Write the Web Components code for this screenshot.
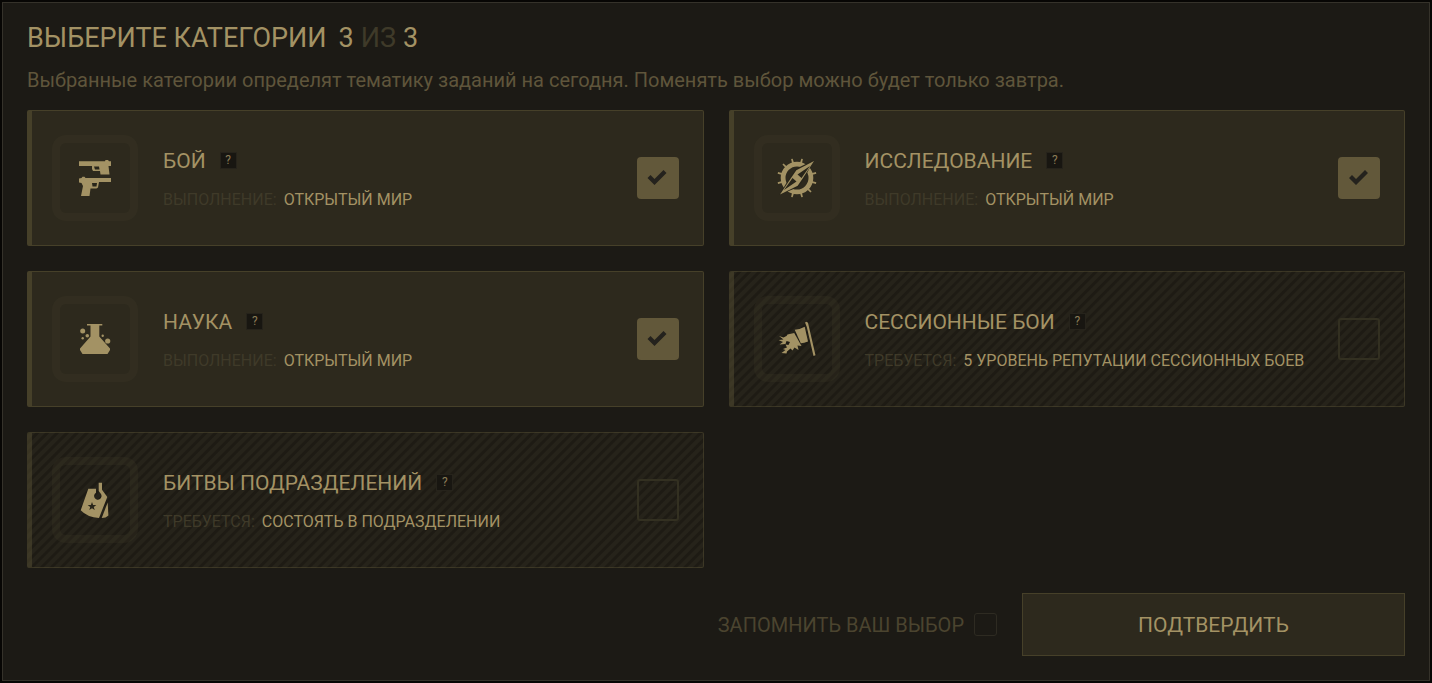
<!DOCTYPE html>
<html lang="ru">
<head>
<meta charset="utf-8">
<title>Выбор категорий</title>
<style>
  :root {
    --gold: #a39264;
    --muted: #5f553b;
    --faint: #3f3a29;
    --page: #1c1a15;
    --card: #2d291d;
    --line: #464029;
  }
  html { background: #070604; }
  body {
    margin: 0;
    padding: 2px;
    color: var(--gold);
    font-family: Roboto, "Liberation Sans", sans-serif;
  }
</style>
</head>
<body>
<category-picker>
  <span slot="heading">ВЫБЕРИТЕ КАТЕГОРИИ</span>
  <pick-counter slot="counter" picked="3" total="3"></pick-counter>
  <span slot="description">Выбранные категории определят тематику заданий на сегодня. Поменять выбор можно будет только завтра.</span>
  <category-card checked>
    <category-icon slot="icon" name="combat"></category-icon>
    БОЙ
    <span slot="term">ВЫПОЛНЕНИЕ:</span>
    <span slot="value">ОТКРЫТЫЙ МИР</span>
  </category-card>
  <category-card checked>
    <category-icon slot="icon" name="explore"></category-icon>
    ИССЛЕДОВАНИЕ
    <span slot="term">ВЫПОЛНЕНИЕ:</span>
    <span slot="value">ОТКРЫТЫЙ МИР</span>
  </category-card>
  <category-card checked>
    <category-icon slot="icon" name="science"></category-icon>
    НАУКА
    <span slot="term">ВЫПОЛНЕНИЕ:</span>
    <span slot="value">ОТКРЫТЫЙ МИР</span>
  </category-card>
  <category-card locked>
    <category-icon slot="icon" name="session"></category-icon>
    СЕССИОННЫЕ БОИ
    <span slot="term">ТРЕБУЕТСЯ:</span>
    <span slot="value">5 УРОВЕНЬ РЕПУТАЦИИ СЕССИОННЫХ БОЕВ</span>
  </category-card>
  <category-card locked>
    <category-icon slot="icon" name="squad"></category-icon>
    БИТВЫ ПОДРАЗДЕЛЕНИЙ
    <span slot="term">ТРЕБУЕТСЯ:</span>
    <span slot="value">СОСТОЯТЬ В ПОДРАЗДЕЛЕНИИ</span>
  </category-card>
  <remember-choice slot="footer">ЗАПОМНИТЬ ВАШ ВЫБОР</remember-choice>
  <confirm-button slot="footer">ПОДТВЕРДИТЬ</confirm-button>
</category-picker>

<script>
class Component extends HTMLElement {
  constructor() {
    super();
    this.attachShadow({ mode: 'open' });
  }
  connectedCallback() {
    this.shadowRoot.innerHTML = this.render();
  }
}

class CategoryPicker extends Component {
  render() {
    return `
      <style>
        :host {
          display: block;
          box-sizing: border-box;
          min-height: calc(100vh - 4px);
          padding: 19px 24px 24px;
          border: 1px solid #35322a;
          background: var(--page);
        }
        header { display: flex; align-items: baseline; gap: 12px; }
        h1 { margin: 0; font-size: 27px; font-weight: 400; line-height: 32px; }
        p { margin: 8px 0 12px; color: var(--muted); font-size: 20px; line-height: 36px; }
        .grid { display: grid; grid-template-columns: 1fr 1fr; gap: 25px; }
        footer { display: flex; justify-content: flex-end; align-items: center; gap: 25px; margin-top: 25px; }
      </style>
      <header><h1><slot name="heading"></slot></h1><slot name="counter"></slot></header>
      <p><slot name="description"></slot></p>
      <div class="grid"><slot></slot></div>
      <footer><slot name="footer"></slot></footer>`;
  }
}

class PickCounter extends Component {
  render() {
    return `
      <style>
        :host { display: inline-flex; gap: 7px; font-size: 27px; line-height: 32px; }
        .of { color: var(--faint); }
      </style>
      <span>${this.getAttribute('picked')}</span><span class="of">ИЗ</span><span>${this.getAttribute('total')}</span>`;
  }
}

class CategoryCard extends Component {
  render() {
    const checked = this.hasAttribute('checked') ? 'checked' : '';
    const locked = this.hasAttribute('locked') ? 'disabled' : '';
    return `
      <style>
        :host {
          display: flex;
          align-items: center;
          box-sizing: border-box;
          min-height: 136px;
          padding: 24px 24px 24px 20px;
          border: 1px solid var(--line);
          border-left-width: 5px;
          border-radius: 2px;
          background: var(--card);
        }
        :host([locked]) {
          border-color: rgba(84, 78, 50, .5);
          background: repeating-linear-gradient(135deg, #1e1b14 0 2px, #26231a 3px 6px, #1e1b14 7px) border-box;
        }
        .text { flex: 1; min-width: 0; margin-left: 25px; }
        .top { display: flex; align-items: center; gap: 14px; margin-bottom: 17px; }
        label { font-size: 21px; line-height: 26px; }
        button {
          box-sizing: border-box; width: 17px; height: 17px; padding: 0;
          border: 1px solid #26231b; background: #181611; color: #8a7c56;
          font: 12px/15px Roboto, "Liberation Sans", sans-serif;
        }
        .detail { display: flex; gap: 7px; font-size: 16px; line-height: 18px; white-space: nowrap; }
        .term { color: var(--faint); }
        input {
          appearance: none; flex: none; box-sizing: border-box;
          width: 42px; height: 42px; margin: 0;
          border: 2px solid #333021; border-radius: 3px;
        }
        input:checked { border: 0; border-radius: 4px; background: #62583a; }
        input:checked::after {
          content: ""; display: block; width: 42px; height: 42px;
          background: #24221d;
          clip-path: polygon(11px 21px, 14px 18px, 18px 22px, 27px 13px, 30px 16px, 18px 28px);
        }
      </style>
      <slot name="icon"></slot>
      <div class="text">
        <div class="top"><label for="pick"><slot></slot></label><button type="button">?</button></div>
        <div class="detail"><span class="term"><slot name="term"></slot></span><slot name="value"></slot></div>
      </div>
      <input id="pick" type="checkbox" ${checked} ${locked}>`;
  }
}

const ICONS = {
  combat: `
    <path d="M4 3.3H30L30.5 2H33L34 3.3H36V8H33.500L34.500 16.500H25.500L25 13H18L17 11V8H4Z"/>
    <path class="cut" d="M19 8.500H24L24.500 11.500H20Z"/>
    <path d="M4 20.500L6.500 20L7.500 18.700H9.500L10.500 20H36V24H24L23 29.500L21.500 30.500H15.500L14.500 38H6L8 28L6.500 25L4 24.500Z"/>
    <path class="cut" d="M17 25H22L21.500 28.500H17.500Z"/>`,
  explore: `
    <g class="ray">${Array.from({ length: 12 }, (_, i) =>
      `<path d="M19.200 .2L20.800 .2L21 5H19Z" transform="rotate(${15 + i * 30} 20 20)"/>`).join('')}</g>
    <circle class="ring" cx="20" cy="20" r="13.900"/>
    <path class="cut" d="M37 2L18.500 11L13.500 18.500L2 37L21.500 29L26.500 21.500Z"/>
    <path d="M37 3L19.300 12.300L15 18.500L3 36.500L20.700 27.700L25 21.500Z"/>
    <path class="cut" d="M33 8L24.500 20L20.500 16.500Z M7 32L15.500 20L19.500 23.500Z"/>`,
  science: `
    <path d="M12 5H27.300V6.500H24.300V17.500L35 29.500V31L32.500 35H7.500L5 31V29.500L15.500 17.500V6.500H12Z"/>
    <circle cx="7.700" cy="12" r="2.500"/><circle cx="12.300" cy="16.700" r="1.800"/><circle cx="7.700" cy="19.300" r="1.200"/>
    <circle cx="27.700" cy="16.700" r="1.200"/><circle cx="32.700" cy="22" r="2.600"/>`,
  session: `
    <path d="M28 3.500L29.500 2.700L31 3.800L38.500 36.300L36.500 37L29.800 8Z"/>
    <path d="M17.700 10.800Q23 10.500 27.700 7.800L31 22.500Q27 24 23.800 24.300Z"/>
    <path d="M17.200 14L24.500 27L20.500 26.500L21.500 31L17.500 28.500L15.500 31.500L13.500 29.500L10 32.500L9.500 34.500L4.500 34L8.500 31L6 30L10 28.500L8.500 25.500L11.500 26L13 23L9.500 22L8.500 25L2.500 25.500L6 23L1.500 21L6.500 20.500L2 17L6.500 18.500L9.500 17L10.500 15.500Z"/>`,
  squad: `
    <path d="M13.300 8.700H21V12.800A3.700 3.700 0 1 0 25.800 13.800L23.700 11V2.700H27V9.700L32.300 17L24 38Q12.500 37.500 5.700 30.300Z"/>
    <path d="M32.700 22.500L33.400 35.500Q31 38 26.700 38Z"/>
    <path class="cut" d="M17 22L18.100 25L21.300 25.100L18.800 27L19.700 30.100L17 28.300L14.300 30.100L15.200 27L12.700 25.100L15.900 25Z"/>`,
};

class CategoryIcon extends Component {
  render() {
    return `
      <style>
        :host {
          display: flex; flex: none; align-items: center; justify-content: center;
          box-sizing: border-box; width: 86px; height: 86px;
          border: 8px solid rgba(70, 66, 44, .2); border-radius: 14px;
        }
        svg { width: 40px; height: 40px; fill: #a39264; }
        .cut { fill: #28251a; }
        .ring { fill: none; stroke: #a39264; stroke-width: 4.800; }
      </style>
      <svg viewBox="0 0 40 40" aria-hidden="true">${ICONS[this.getAttribute('name')]}</svg>`;
  }
}

class RememberChoice extends Component {
  render() {
    return `
      <style>
        :host { display: flex; align-items: center; gap: 10px; color: #4b442f; }
        label { font-size: 20px; line-height: 24px; }
        input {
          appearance: none; box-sizing: border-box; width: 23px; height: 23px; margin: 0;
          border: 1px solid #2e2b22; border-radius: 3px;
        }
      </style>
      <label for="remember"><slot></slot></label><input id="remember" type="checkbox">`;
  }
}

class ConfirmButton extends Component {
  render() {
    return `
      <style>
        :host { display: block; flex: 0 0 383px; }
        button {
          width: 100%; height: 63px; padding: 0;
          border: 1px solid var(--line); background: var(--card);
          color: inherit; font-family: inherit; font-size: 21px; line-height: 28px;
        }
      </style>
      <button type="button"><slot></slot></button>`;
  }
}

customElements.define('category-picker', CategoryPicker);
customElements.define('pick-counter', PickCounter);
customElements.define('category-card', CategoryCard);
customElements.define('category-icon', CategoryIcon);
customElements.define('remember-choice', RememberChoice);
customElements.define('confirm-button', ConfirmButton);
</script>
</body>
</html>
